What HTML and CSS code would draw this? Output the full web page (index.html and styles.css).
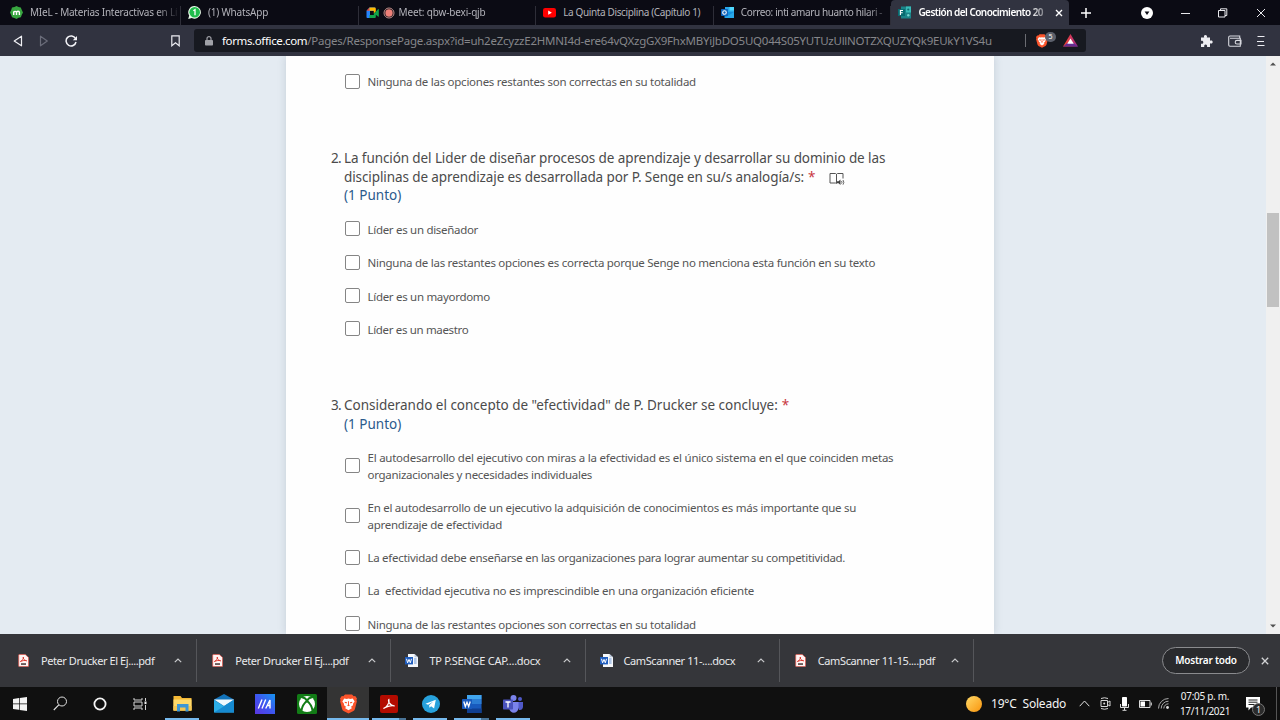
FILE: index.html
```html
<!DOCTYPE html>
<html lang="es">
<head>
<meta charset="utf-8">
<title>Gestión del Conocimiento 2021</title>
<link rel="stylesheet" href="styles.css">
</head>
<body>
<svg width="0" height="0" class="defs">
  <defs>
    <linearGradient id="g-bat" x1="0" x2="1"><stop offset="0" stop-color="#ff4724"/><stop offset="1" stop-color="#a0278c"/></linearGradient>
    <linearGradient id="g-my" x1="0" y1="1" x2="1" y2="0"><stop offset="0" stop-color="#5a35e0"/><stop offset=".5" stop-color="#3d56f0"/><stop offset="1" stop-color="#1595f0"/></linearGradient>
    <linearGradient id="g-sun" x1="0" y1="0" x2="1" y2="1"><stop offset="0" stop-color="#ffd968"/><stop offset="1" stop-color="#f9940c"/></linearGradient>
    <symbol id="pdf" viewBox="0 0 11 13"><path d="M1.3.5h6L10.5 3.4V12a.6.6 0 0 1-.6.6H1.3a.6.6 0 0 1-.6-.6V1a.6.6 0 0 1 .6-.5z" fill="#fff4f3" stroke="#e2574c" stroke-width=".7"/><path d="M2.4 7.5c2-1 3.4-3.2 3-4.5-.8.6.5 3.6 3.3 3.800-2-.7-4.300-.2-6.300.7z" fill="none" stroke="#dc3b30" stroke-width="1"/><path d="M3 9.200h5v1.700H3z" fill="#594a4a"/></symbol>
    <symbol id="doc" viewBox="0 0 13 13"><path d="M3 0h6.500L13 3.200V13H3z" fill="#f6f8fb"/><path d="M9.500 0v3.200H13z" fill="#b9c8dc"/><path d="M9 5h2.600M9 7h2.600M9 9h2.600" stroke="#6894d4"/><rect y="3" width="8" height="7.400" fill="#1f5dbe"/><path d="M1.500 4.800l1.100 4L4 5.400l1.300 3.400 1.200-4" fill="none" stroke="#fff"/></symbol>
    <symbol id="up" viewBox="0 0 8 5"><path d="M.8 4.200L4 1l3.200 3.200" fill="none" stroke="#c9cacc" stroke-width="1.200"/></symbol>
    <symbol id="lion" viewBox="0 0 18 20"><path d="M5.300 0h7.400l1.800 1.900 1.600-.3L18 4.100l-.6 1.600.5 1.500-2.100 8c-.3 1-.8 1.700-1.600 2.300L9 20l-5.200-2.500c-.8-.6-1.300-1.300-1.600-2.300L.1 7.200l.5-1.500L0 4.100l1.900-2.500 1.600.3z" fill="#fb542b"/><path d="M4.500 4.200l2.700.4L9 4.200l1.800.4 2.700-.4 2 3.100-1.600 2.200-.2 1.800-2.300 1.800 1.400 1.200L9 16.700l-3.800-2.400 1.400-1.200-2.300-1.800-.2-1.800-1.600-2.200z" fill="#fff"/><path d="M5 7.500l2.600.7-.8 1.300L5 8.700zM13 7.500l-2.600.7.8 1.300 1.800-.8zM8.500 7h1v3.500l.9 1L9 12.500l-1.400-1 .9-1z" fill="#fb542b"/></symbol>
  </defs>
</svg>
<div class="browser">
  <header class="tabs">
    <div class="tab"><svg class="fav" viewBox="0 0 13 13"><path d="M6.500 0l2 1 2.300.5.900 2.200L13 6.500l-1.300 2.400-.8 2.300-2.400.6-2 1.200-2.100-1.100-2.400-.6-.8-2.400L0 6.500l1.200-2.500.8-2.400L4.500 1z" fill="#38a640"/><path d="M3.700 9V5.400v.8c.5-1.100 2.700-1.200 2.800.3V9 6.300c.4-1.500 2.900-1.400 2.900.3V9" fill="none" stroke="#fff" stroke-width="1.400"/></svg><span class="tab-text t1">MIeL - Materias Interactivas en Lí</span></div>
    <div class="tab"><svg class="fav" viewBox="0 0 13 13"><path d="M6.700 0a6.300 6.300 0 1 1-3 11.900L.2 13l1-3.400A6.300 6.300 0 0 1 6.700 0z" fill="#e9fbe9"/><circle cx="6.700" cy="6.300" r="5.300" fill="#20bd4c"/><path d="M5.300 4.700l1.700-1v5.600" fill="none" stroke="#fff" stroke-width="1.300"/></svg><span class="tab-text t2">(1) WhatsApp</span></div>
    <div class="tab"><svg class="fav" viewBox="0 0 13 13"><path d="M3.500 1.500h5.700V5H4v7H1.200Q.5 12 .5 11V4.700z" fill="#2684fc"/><path d="M3.500 1.500L.5 4.700h3z" fill="#ea4335"/><path d="M3.500 1.500h5q1.300 0 1.300 1.200v2.800l-2 2V4.700H3.500z" fill="#ffba00"/><path d="M3.500 9h4.300V7.500l2-1.500v5q0 1-1 1H3.500zM9.500 6L12 3.200q.8-.4.800.4v6.600q0 .8-.8.400L9.500 8.500z" fill="#12a64b"/></svg><svg class="rec" viewBox="0 0 12 12"><circle cx="6" cy="6" r="5" fill="none" stroke="#c4908c" stroke-width="1"/><circle cx="6" cy="6" r="3.700" fill="#ee8078"/></svg><span class="tab-text t3">Meet: qbw-bexi-qjb</span></div>
    <div class="tab"><svg class="fav" viewBox="0 0 13 13"><rect y="2" width="13" height="9.400" rx="2.200" fill="#f00"/><path d="M5.200 4.500v4.300l3.700-2.100z" fill="#fff"/></svg><span class="tab-text t4">La Quinta Disciplina (Capítulo 1)</span></div>
    <div class="tab"><svg class="fav" viewBox="0 0 13 13"><rect x="4" y="1" width="9" height="6" fill="#28a8ea"/><path d="M8.500 1H13v3.500H8.500z" fill="#50d9ff"/><path d="M3.500 6H13v6H3.500z" fill="#1490df"/><path d="M3.500 12L13 6v6z" fill="#28a8ea"/><rect y="3" width="7" height="7" rx=".7" fill="#0f65bd"/><circle cx="3.500" cy="6.500" r="1.800" fill="none" stroke="#fff" stroke-width="1.100"/></svg><span class="tab-text t5">Correo: inti amaru huanto hilari -</span></div>
    <div class="tab active"><svg class="fav" viewBox="0 0 13 13"><path d="M3 .5h10v12H3z" fill="#1b8489"/><path d="M8 .5h5v6H8z" fill="#38bcb8"/><circle cx="10.300" cy="3.500" r="1.100" fill="#126a70"/><circle cx="10.300" cy="9.300" r="1.200" fill="#76d5cf"/><rect y="3" width="7" height="7" fill="#076b70"/><path d="M2.400 9V4.500H5M2.400 6.700h2.300" fill="none" stroke="#fff" stroke-width="1.100"/></svg><span class="tab-text t6">Gestión del Conocimiento 20</span><svg class="close" viewBox="0 0 8 8"><path d="M1 1l6 6M7 1L1 7" stroke="#fff" stroke-width="1.400"/></svg></div>
    <svg class="plus" viewBox="0 0 10 10"><path d="M5 0v10M0 5h10" stroke="#fff" stroke-width="1.500"/></svg>
    <div class="winctl">
      <svg width="12" height="12" viewBox="0 0 12 12"><circle cx="6" cy="6" r="6" fill="#fff"/><path d="M3.600 4.500h4.800L6 8z" fill="#0b0b14"/></svg>
      <svg width="9" height="10" viewBox="0 0 9 10"><path d="M0 5.500h9" stroke="#e8e8ec"/></svg>
      <svg width="10" height="10" viewBox="0 0 10 10"><path d="M.5 2.500h6.500v6.500H.5zM2.500 2.500V.8h6.300V7.500H7" fill="none" stroke="#e8e8ec"/></svg>
      <svg width="10" height="10" viewBox="0 0 10 10"><path d="M1 1l8 8M9 1L1 9" stroke="#e8e8ec"/></svg>
    </div>
  </header>
  <nav class="toolbar">
    <div class="navbtns">
      <svg width="10" height="12" viewBox="0 0 10 12"><path d="M8.500 1.200v9.600L1.200 6z" fill="none" stroke="#f0f0f4" stroke-width="1.200" stroke-linejoin="round"/></svg>
      <svg width="10" height="12" viewBox="0 0 10 12"><path d="M1.500 1.200v9.600L8.300 6z" fill="none" stroke="#6b6d7a" stroke-width="1.200" stroke-linejoin="round"/></svg>
      <svg width="13" height="12" viewBox="0 0 13 12"><path d="M10.500 3.500A5 5 0 1 0 11 7" fill="none" stroke="#f4f4f8" stroke-width="1.500"/><path d="M12 1v4.300H7.800z" fill="#f4f4f8"/></svg>
    </div>
    <svg class="mark" viewBox="0 0 9 12"><path d="M.8.800h7.400v10L4.500 7.800.8 10.800z" fill="none" stroke="#ececf1" stroke-width="1.200"/></svg>
    <div class="url">
      <svg class="lock" viewBox="0 0 8 10"><rect y="4" width="8" height="5.500" rx=".8" fill="#a0a1a7"/><path d="M2 4V2.600a2 2 0 0 1 4 0V4" fill="none" stroke="#a0a1a7" stroke-width="1.200"/></svg>
      <span class="address"><b>forms.office.com</b><span class="path">/Pages/ResponsePage.aspx?id=uh2eZcyzzE2HMNI4d-ere64vQXzgGX9FhxMBYiJbDO5UQ044S05YUTUzUllNOTZXQUZYQk9EUkY1VS4u</span></span>
      <i class="bar"></i>
      <span class="shield"><svg width="12" height="14"><use href="#lion"/></svg><em>5</em></span>
      <svg class="bat" viewBox="0 0 16 14"><path d="M8 0l8 13.500H0z" fill="url(#g-bat)"/><path d="M0 13.500h16L11.500 9.800h-7z" fill="#662d91"/><path d="M8 4.900l3.500 5.700h-7z" fill="#fff"/></svg>
    </div>
    <div class="tools">
      <svg width="13" height="12" viewBox="0 0 13 12"><path d="M1 2.500h3.200C3.500.7 4.400 0 5.500 0s2 .9 1.300 2.500H10v3.200c1.700-.7 2.700.1 2.700 1.300S11.700 9 10 8.300V12H7c.5-1.800-.3-2.600-1.400-2.600S3.900 10.200 4.300 12H1V8.700c1.500.4 2.300-.4 2.300-1.500S2.500 5.400 1 5.800z" fill="#eeeef2"/></svg>
      <svg width="14" height="12" viewBox="0 0 14 12"><path d="M11.700 3.300V1H2q-1.300 0-1.300 1.200V10q0 1.200 1.300 1.200h10.300V3.300H2M13 5.400H9a1.800 1.800 0 0 0 0 3.600h4z" fill="none" stroke="#d8d9df" stroke-width="1.100"/></svg>
      <svg width="8" height="12" viewBox="0 0 8 12"><path d="M.5 1.500h7M0 6.500h7M.5 10.500h7" stroke="#ededf2" stroke-width="1"/></svg>
    </div>
  </nav>
  <main class="viewport">
    <section class="paper">
      <div class="option tail"><i class="box"></i><span class="o1">Ninguna de las opciones restantes son correctas en su totalidad</span></div>
      <article class="question q2">
        <div class="heading"><span class="num">2.</span><div class="title">
          <div><span class="h1">La función del Lider de diseñar procesos de aprendizaje y desarrollar su dominio de las</span></div>
          <div><span class="h2">disciplinas de aprendizaje es desarrollada por P. Senge en su/s analogía/s:</span> <span class="req">*</span><svg class="reader" viewBox="0 0 16 14"><path d="M7.500 11.500L6.500 11H1V1.500h5.500l1 .8 1-.8H14v5M7.500 2v9.500" fill="none" stroke="#555" stroke-width="1"/><path d="M8 9.300h1.500L11.500 7.500v5.600l-2-1.800H8z" fill="#444"/><path d="M12.500 9q1 1.300 0 2.600M14 8q1.700 2.300 0 4.700" fill="none" stroke="#444" stroke-width=".8"/></svg></div>
          <div class="points"><span class="pt">(1 Punto)</span></div></div></div>
        <div class="options">
          <div class="option"><i class="box"></i><span class="o2">Líder es un diseñador</span></div>
          <div class="option"><i class="box"></i><span class="o3">Ninguna de las restantes opciones es correcta porque Senge no menciona esta función en su texto</span></div>
          <div class="option"><i class="box"></i><span class="o4">Líder es un mayordomo</span></div>
          <div class="option"><i class="box"></i><span class="o5">Líder es un maestro</span></div>
        </div>
      </article>
      <article class="question q3">
        <div class="heading"><span class="num">3.</span><div class="title">
          <div><span class="h3">Considerando el concepto de "efectividad" de P. Drucker se concluye:</span> <span class="req">*</span></div>
          <div class="points"><span class="pt">(1 Punto)</span></div></div></div>
        <div class="options">
          <div class="option two"><i class="box"></i><p><span class="o6">El autodesarrollo del ejecutivo con miras a la efectividad es el único sistema en el que coinciden metas</span><br><span class="o7">organizacionales y necesidades individuales</span></p></div>
          <div class="option two"><i class="box"></i><p><span class="o8">En el autodesarrollo de un ejecutivo la adquisición de conocimientos es más importante que su</span><br><span class="o9">aprendizaje de efectividad</span></p></div>
          <div class="option"><i class="box"></i><span class="o10">La efectividad debe enseñarse en las organizaciones para lograr aumentar su competitividad.</span></div>
          <div class="option"><i class="box"></i><span class="o11">La &nbsp;efectividad ejecutiva no es imprescindible en una organización eficiente</span></div>
          <div class="option"><i class="box"></i><span class="o12">Ninguna de las restantes opciones son correctas en su totalidad</span></div>
        </div>
      </article>
    </section>
    <div class="scroll"><svg viewBox="0 0 6 4"><path d="M0 3.500L3 .5l3 3z" fill="#505050"/></svg><i class="thumb"></i><svg class="down" viewBox="0 0 6 4"><path d="M0 .5h6l-3 3z" fill="#505050"/></svg></div>
  </main>
  <section class="downloads">
    <div class="dl"><svg class="file"><use href="#pdf"/></svg><span class="d1">Peter Drucker El Ej....pdf</span><svg class="caret"><use href="#up"/></svg></div>
    <div class="dl"><svg class="file"><use href="#pdf"/></svg><span class="d1">Peter Drucker El Ej....pdf</span><svg class="caret"><use href="#up"/></svg></div>
    <div class="dl"><svg class="file"><use href="#doc"/></svg><span class="d2">TP P.SENGE CAP....docx</span><svg class="caret"><use href="#up"/></svg></div>
    <div class="dl"><svg class="file"><use href="#doc"/></svg><span class="d3">CamScanner 11-....docx</span><svg class="caret"><use href="#up"/></svg></div>
    <div class="dl"><svg class="file"><use href="#pdf"/></svg><span class="d4">CamScanner 11-15....pdf</span><svg class="caret"><use href="#up"/></svg></div>
    <button class="showall">Mostrar todo</button>
    <svg class="dismiss" viewBox="0 0 8 8"><path d="M.8.800l6.400 6.400M7.200.800L.8 7.200" stroke="#d2d3d5" stroke-width="1.300"/></svg>
  </section>
  <footer class="taskbar">
    <div class="app"><svg width="14" height="14" viewBox="0 0 14 14"><path d="M0 2l6-.9v5.500H0zM6.700 1L14 0v6.600H6.700zM0 7.300h6v5.500L0 12zM6.700 7.300H14V14l-7.300-1.100z" fill="#f2f2f2"/></svg></div>
    <div class="app"><svg width="15" height="15" viewBox="0 0 15 15"><circle cx="9" cy="5.500" r="4.500" fill="none" stroke="#e0e0e0"/><path d="M5.800 8.800L.8 14" stroke="#e0e0e0" stroke-width="1.100"/></svg></div>
    <div class="app"><svg width="14" height="14" viewBox="0 0 14 14"><circle cx="7" cy="7" r="5.600" fill="none" stroke="#f4f4f4" stroke-width="1.800"/></svg></div>
    <div class="app"><svg width="15" height="14" viewBox="0 0 15 14"><path d="M1 1v2h8V1M1 13v-2h8v2M1 5h8v4H1zM12.500 1v3M12.500 8v5" fill="none" stroke="#d6d6d6"/><path d="M11.500 4.500h2v2.600h-2z" fill="#eee"/></svg></div>
    <div class="app running"><svg width="19" height="17" viewBox="0 0 19 17"><path d="M.5 1h7l1.500 2h9.500v12.500H.5z" fill="#f5b936"/><path d="M.5 4.500h18v11H.5z" fill="#ffd96a"/><path d="M.5 11h18v4.500H.5z" fill="#f4c653"/><path d="M4 16.500V9h11.500v7.500h-3v-4H7v4z" fill="#3d96d5"/></svg></div>
    <div class="app"><svg width="20" height="19" viewBox="0 0 20 19"><path d="M10 0l10 5.500V18H0V5.500z" fill="#1272b9"/><path d="M0 5.500h20L10 12z" fill="#eff9fe"/><path d="M0 6L10 12.300 20 6v12.500H0z" fill="#2caee8"/><path d="M0 18.500L20 6v12.500z" fill="#168ad0"/></svg></div>
    <div class="app"><svg width="20" height="20" viewBox="0 0 20 20"><path d="M0 0h20v20H0z" fill="url(#g-my)"/><path d="M3.300 14.500l3.700-9M7 14.500l3.700-9M10.700 14.500L15 6v8.500M12.800 11.500H15" stroke="#fff" stroke-width="1.400" fill="none"/></svg></div>
    <div class="app"><svg width="20" height="20" viewBox="0 0 20 20"><rect width="20" height="20" rx="1.500" fill="#127c16"/><circle cx="10" cy="10" r="8" fill="#fff"/><path d="M4.500 16.500C5 12.500 7.500 9 10 6.800c2.500 2.200 5 5.700 5.500 9.700M5 3.500c2-.3 3.800 1 5 3.300 1.200-2.300 3-3.600 5-3.300" fill="none" stroke="#127c16" stroke-width="2"/></svg></div>
    <div class="app running current"><svg width="17" height="20"><use href="#lion"/></svg></div>
    <div class="app running stacked"><svg width="18" height="18" viewBox="0 0 18 18"><rect width="18" height="18" rx="2" fill="#b30b00"/><path d="M3.500 13.500c3-.8 6.500-6.300 5.400-9-1.300.8.400 6.200 5.800 6.500-3-.9-8.200.2-11.200 2.500z" fill="none" stroke="#fff" stroke-width="1.200"/></svg></div>
    <div class="app running"><svg width="18" height="18" viewBox="0 0 18 18"><circle cx="9" cy="9" r="9" fill="#27a1dc"/><path d="M3.500 8.800l10.300-4-1.700 8.700-3-2.200-1.600 1.500-.4-2.600 4.200-3.800-5.200 3.300z" fill="#fff"/></svg></div>
    <div class="app running stacked"><svg width="20" height="18" viewBox="0 0 20 18"><path d="M5 0h14.500v18H5z" fill="#185abd"/><path d="M5 0h14.500v4.500H5z" fill="#41a5ee"/><path d="M5 4.500h14.500V9H5z" fill="#2b7cd3"/><path d="M5 13.500h14.500V18H5z" fill="#103f91"/><rect y="4" width="10" height="10" rx=".7" fill="#185abd"/><path d="M1.800 6.500l1.500 5L5 7.200l1.700 4.300 1.500-5" stroke="#fff" stroke-width="1.300" fill="none"/></svg></div>
    <div class="app running"><svg width="20" height="18" viewBox="0 0 20 18"><circle cx="10.500" cy="3" r="3" fill="#7b83eb"/><circle cx="17" cy="4" r="2" fill="#5059c9"/><path d="M13 7h7v5q-.5 3.500-4 3z" fill="#5059c9"/><path d="M6 7h9.500v6c-.5 6-8.500 6.500-9.500 0z" fill="#7b83eb"/><rect y="4.500" width="10" height="10" rx=".7" fill="#4b53bc"/><path d="M2.500 7h5M5 7v5.500" stroke="#fff" stroke-width="1.300"/></svg></div>
    <div class="tray">
      <svg class="sun" viewBox="0 0 16 16"><circle cx="8" cy="8" r="8" fill="url(#g-sun)"/></svg>
      <span class="temp">19°C&nbsp; Soleado</span>
      <svg class="tup" viewBox="0 0 11 7"><path d="M.7 6.200L5.500 1l4.800 5.200" fill="none" stroke="#e2e2e2"/></svg>
      <svg class="meet" viewBox="0 0 11 13"><path d="M1 3.500h6.500v6H1zM7.500 5.500L10 4v5L7.500 7.500M1 1.500q3.500-1.500 7 0M1 11.500q3.500 1.500 7 0" fill="none" stroke="#d6d6d6"/><circle cx="4.200" cy="6.500" r="1" fill="#ddd"/></svg>
      <svg class="mic" viewBox="0 0 9 14"><rect x="2" width="5" height="9.500" rx=".8" fill="#fff"/><path d="M.5 7v3.500h8V7M4.500 10.500V13M2.500 13.300h4" stroke="#ddd" fill="none"/></svg>
      <svg class="battery" viewBox="0 0 13 8"><path d="M.5 .500h10.500v7H.5zM12.300 2.500v3" stroke="#ddd" fill="none"/><path d="M1.500 1.500h4.500v5H1.500z" fill="#fff"/></svg>
      <svg class="wifi" viewBox="0 0 11 11"><path d="M.5 10.500A10 10 0 0 1 10.500.5M3.200 10.500a7.300 7.300 0 0 1 7.300-7.300M5.800 10.500a4.700 4.700 0 0 1 4.700-4.700" fill="none" stroke="#aaa"/><circle cx="9.500" cy="9.500" r="1.400" fill="#ddd"/></svg>
      <div class="clock"><span class="time">07:05 p. m.</span><span class="date">17/11/2021</span></div>
      <span class="notif"><svg width="14" height="14" viewBox="0 0 14 14"><path d="M0 0h14v10.500H5L2.500 13.500v-3H0z" fill="#fff"/><path d="M2.500 3h9M2.500 5.200h9M2.500 7.500h6" stroke="#222"/></svg><em>1</em></span>
      <i class="edge"></i>
    </div>
  </footer>
</div>
</body>
</html>
```
FILE: styles.css
```css
* { box-sizing: border-box; }
body { margin: 0; overflow: hidden; font-family: "Noto Sans", "Open Sans", sans-serif; }
.defs { display: block; width: 0; height: 0; }
svg { display: block; flex: none; }
span { white-space: nowrap; }
i, em { font-style: normal; }
.browser { width: 1280px; height: 720px; display: flex; flex-direction: column; overflow: hidden; }

.tabs { height: 25px; flex: none; display: flex; align-items: center; background: #0b0b14; }
.tab { width: 177.600px; height: 25px; padding: 0 4px 0 7px; display: flex; align-items: center; font-size: 10px; color: #b3b3ba; position: relative; }
.tab:first-child { width: 181px; padding-left: 10px; }
.tab:not(.active)::after { content: ""; position: absolute; right: 0; top: 6px; width: 1px; height: 19px; background: #2e2e38; }
.fav { width: 13px; height: 13px; margin-right: 7px; }
.rec { width: 12px; height: 12px; margin: 0 4px 0 -3px; }
.tab-text { flex: 1; min-width: 0; line-height: 16px; padding-bottom: 1px; -webkit-mask-image: linear-gradient(90deg, #000 86%, rgba(0, 0, 0, .15)); mask-image: linear-gradient(90deg, #000 86%, rgba(0, 0, 0, .15)); }
.t1 { letter-spacing: -.23px; }
.t2 { letter-spacing: -.2px; }
.t3 { letter-spacing: -.17px; }
.t4 { letter-spacing: -.37px; -webkit-mask-image: none; mask-image: none; }
.t5 { letter-spacing: -.38px; }
.t6 { letter-spacing: -.55px; }
.active { background: #313340; color: #fff; font-weight: 600; border-radius: 4px 4px 0 0; padding-right: 6px; }
.close { width: 8px; height: 8px; margin: 0 0 0 6px; }
.plus { width: 10px; height: 10px; margin-left: 12px; }
.winctl { margin-left: auto; display: flex; align-items: center; gap: 28px; padding-right: 14px; }

.toolbar { height: 31px; flex: none; display: flex; align-items: center; background: #313340; }
.navbtns { display: flex; align-items: center; gap: 16px; padding-left: 13px; width: 171px; }
.mark { width: 9px; height: 12px; }
.url { width: 892px; height: 23px; margin-left: 14px; padding-left: 11px; display: flex; align-items: center; background: #171920; border-radius: 3px; }
.lock { width: 8px; height: 10px; margin-right: 9px; }
.address { width: 803px; font-size: 11.500px; line-height: 22px; color: #85868a; }
.address b { font-weight: 400; color: #fff; letter-spacing: -.37px; }
.path { letter-spacing: -.24px; }
.bar { width: 1px; height: 13px; background: #6b6c72; }
.shield { position: relative; margin-left: 10px; width: 27px; }
.shield em { position: absolute; left: 9px; top: -2px; width: 11px; height: 10px; border-radius: 5px; background: #5c606b; color: #fff; font-size: 7px; line-height: 10px; text-align: center; }
.bat { width: 15px; height: 13px; }
.tools { margin-left: auto; display: flex; align-items: center; gap: 15px; padding-right: 15px; }

.viewport { height: 578px; flex: none; display: flex; justify-content: space-between; overflow: hidden; background: #e4ebf2; }
.paper { width: 708px; margin-left: 286px; padding: 9px 0 0 59px; background: #fefefe; box-shadow: 0 0 8px rgba(80, 100, 120, .22); }
.option { height: 33.300px; display: flex; align-items: center; font-size: 11.500px; color: #555; }
.option p { margin: 0; padding-top: 2px; line-height: 16.700px; }
.option.two { height: 50px; }
.box { width: 15px; height: 15px; flex: none; margin: 0 7.500px 1px 0; border: 1px solid #858585; border-radius: 2px; background: #fff; }
.two .box { margin-bottom: 0; }
.o1, .o3, .o12 { letter-spacing: -.26px; }
.o2, .o4 { letter-spacing: -.3px; }
.o5 { letter-spacing: -.34px; }
.o6, .o11 { letter-spacing: -.24px; }
.o8 { letter-spacing: -.26px; }
.o7, .o10 { letter-spacing: -.29px; }
.o9 { letter-spacing: -.27px; }
.h1, .h2 { letter-spacing: -.1px; }
.h3 { letter-spacing: -.02px; }
.q2 { margin-top: 51px; }
.q3 { margin-top: 50.500px; }
.heading { display: flex; margin-left: -14px; font-size: 13.500px; line-height: 19px; color: #4b4b4b; }
.heading .num { width: 13px; letter-spacing: -.7px; }
.title > div { display: flex; height: 19px; }
.q2 .title > .points { margin-top: -1px; }
.req { color: #c8363e; margin-left: 4px; }
.points { color: #2b5a8c; }
.reader { width: 16px; height: 14px; margin: 4px 0 0 13px; }
.options { padding-top: 7.500px; }
.q3 .options { padding-top: 6.500px; }
.scroll { width: 14px; display: flex; flex-direction: column; align-items: center; background: #f0f0f0; padding: 6px 0; }
.scroll svg { width: 6px; height: 4px; }
.thumb { width: 12px; height: 94px; margin-top: 147px; background: #c1c1c1; }
.scroll .down { margin-top: auto; }

.downloads { height: 53px; flex: none; display: flex; align-items: center; background: #35363a; padding-left: 3px; }
.dl { width: 194.200px; height: 43px; padding-left: 14px; display: flex; align-items: center; border-right: 1px solid #55565a; font-size: 11px; color: #e9eaec; }
.dl span { padding-bottom: 1px; }
.d1 { letter-spacing: -.43px; }
.d2 { letter-spacing: -.27px; }
.d3 { letter-spacing: -.41px; }
.d4 { letter-spacing: -.38px; }
.file { width: 13px; height: 13px; margin-right: 11px; }
.caret { width: 8px; height: 5px; margin: 0 14px 0 auto; }
.showall { width: 88px; height: 27px; margin-left: auto; padding: 0 0 1px; border: 1px solid #8a8b8e; border-radius: 14px; background: #292a2d; color: #fff; font: 600 10px "Noto Sans", sans-serif; letter-spacing: -.2px; }
.dismiss { width: 8px; height: 8px; margin: 0 11px; }

.taskbar { height: 33px; flex: none; display: flex; background: #101010; }
.app { width: 41.350px; height: 33px; display: flex; align-items: center; justify-content: center; position: relative; }
.app:nth-child(-n+4) { width: 40px; }
.app:nth-child(5) { margin-left: 2px; }
.running::after { content: ""; position: absolute; left: 3px; right: 4px; bottom: 0; height: 2px; background: #76b9ed; }
.current { background: #343434; }
.current::after { left: 0; right: 0; }
.stacked::after { background: linear-gradient(90deg, #76b9ed 78%, #4a7496 78%); }
.tray { flex: 1; min-width: 0; display: flex; align-items: center; justify-content: flex-end; color: #f3f3f3; }
.sun { width: 16px; height: 16px; margin-right: 9px; }
.temp { font-size: 12px; width: 75px; letter-spacing: -.2px; }
.tup { width: 11px; height: 7px; margin-left: 13px; }
.meet { width: 11px; height: 13px; margin-left: 10px; }
.mic { width: 9px; height: 14px; margin-left: 9px; }
.battery { width: 13px; height: 8px; margin-left: 10px; }
.wifi { width: 11px; height: 11px; margin-left: 6px; }
.clock { width: 52px; margin-left: 10px; display: flex; flex-direction: column; align-items: center; font-size: 10px; line-height: 15px; letter-spacing: -.3px; }
.notif { position: relative; width: 30px; margin-left: 15px; }
.notif em { position: absolute; left: 6px; top: 6px; width: 13px; height: 13px; border-radius: 50%; border: 1px solid #777; background: #2b2b2b; font-size: 9px; line-height: 11px; text-align: center; }
.edge { width: 1px; height: 33px; background: #555; margin-right: 3px; }
```
